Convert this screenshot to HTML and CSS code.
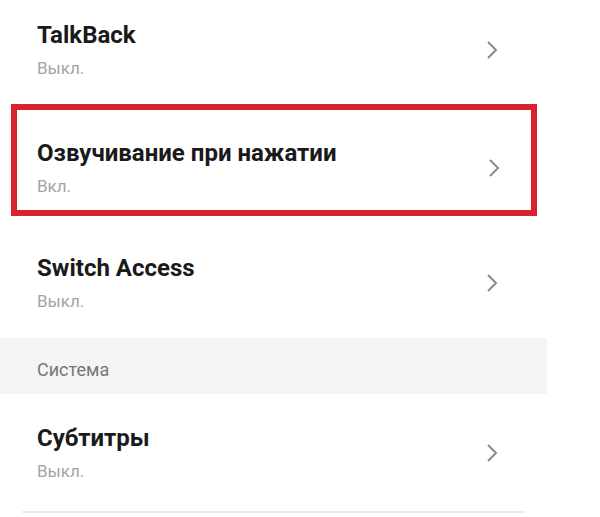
FILE: index.html
```html
<!DOCTYPE html>
<html lang="ru">
<head>
  <meta charset="UTF-8" />
  <meta name="viewport" content="width=device-width, initial-scale=1" />
  <title>Специальные возможности</title>
  <link rel="stylesheet" href="styles.css">
</head>
<body>
  <div class="settings">
    <!-- Screen readers -->
    <div class="row row-first">
      <div class="row-body">
        <div class="row-text">
          <div class="row-title">TalkBack</div>
          <div class="row-sub">Выкл.</div>
        </div>
        <svg class="chevron" width="14" height="22" viewBox="0 0 14 22"><path d="M3 3 L11 11 L3 19" /></svg>
      </div>
    </div>

    <div class="row row-marked">
      <div class="row-body">
        <div class="row-text">
          <div class="row-title">Озвучивание при нажатии</div>
          <div class="row-sub">Вкл.</div>
        </div>
        <svg class="chevron" width="14" height="22" viewBox="0 0 14 22"><path d="M3 3 L11 11 L3 19" /></svg>
      </div>
    </div>

    <div class="row row-third">
      <div class="row-body">
        <div class="row-text">
          <div class="row-title">Switch Access</div>
          <div class="row-sub">Выкл.</div>
        </div>
        <svg class="chevron" width="14" height="22" viewBox="0 0 14 22"><path d="M3 3 L11 11 L3 19" /></svg>
      </div>
    </div>

    <!-- System -->
    <div class="group-header">Система</div>

    <div class="row row-last">
      <div class="row-body">
        <div class="row-text">
          <div class="row-title">Субтитры</div>
          <div class="row-sub">Выкл.</div>
        </div>
        <svg class="chevron" width="14" height="22" viewBox="0 0 14 22"><path d="M3 3 L11 11 L3 19" /></svg>
      </div>
    </div>
    <div class="divider"></div>
  </div>
</body>
</html>
```

FILE: styles.css
```css
body {
  margin: 0;
  padding: 0;
  background: #fff;
  font-family: Roboto, "Noto Sans", sans-serif;
  color: #1b1b1b;
}

.settings {
  width: 547px;
}

.row {
  box-sizing: border-box;
  padding-left: 37px;
  padding-right: 48px;
}

.row-body {
  display: flex;
  align-items: center;
  justify-content: space-between;
}

.row-text {
  display: flex;
  flex-direction: column;
  gap: 9px;
}

.row-title {
  font-size: 24px;
  font-weight: 700;
  line-height: 28px;
  color: #1a1a1a;
}

.row-sub {
  font-size: 17px;
  line-height: 20px;
  color: #a3a3a3;
}

.chevron {
  fill: none;
  stroke: #8a8a8a;
  stroke-width: 2;
}

.row-first {
  height: 100px;
  padding-top: 21px;
}

.row-marked {
  margin: 4px 10px 0 11px;
  height: 112px;
  border: 6px solid #d8222f;
  padding-top: 29px;
  padding-left: 20px;
  padding-right: 30px;
}

.row-third {
  height: 122px;
  padding-top: 38px;
}

.group-header {
  box-sizing: border-box;
  height: 56px;
  padding: 22px 0 0 37px;
  background: #f4f4f4;
  font-size: 18px;
  line-height: 20px;
  color: #777;
}

.row-last {
  height: 117px;
  padding-top: 30px;
}

.divider {
  margin: 0 22px;
  height: 2px;
  background: #ececec;
}
```
